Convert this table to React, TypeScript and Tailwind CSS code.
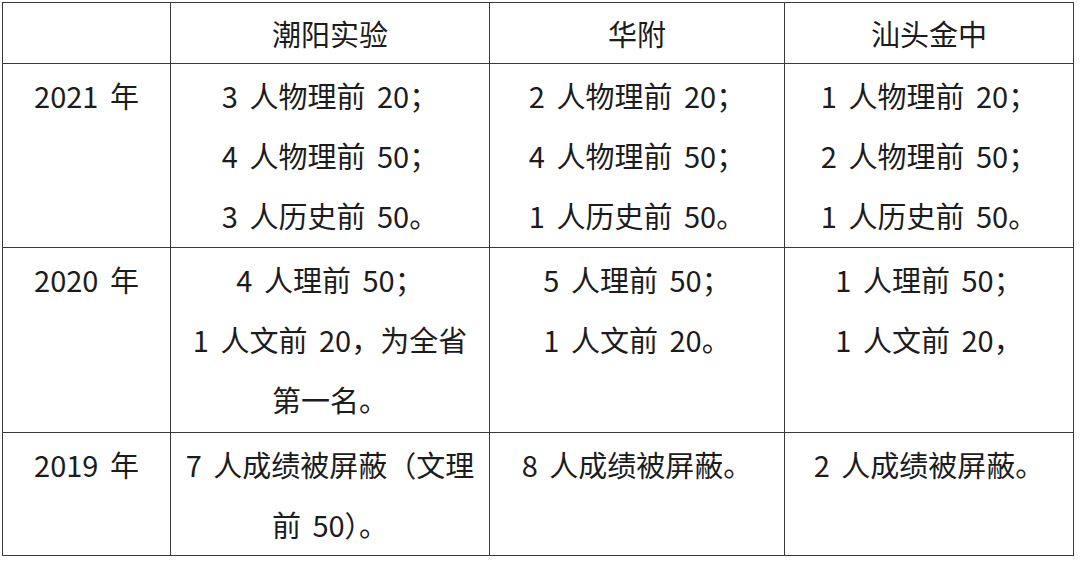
const rows = [
  {
    year: '2021 年',
    cells: [
      ['3 人物理前 20；', '4 人物理前 50；', '3 人历史前 50。'],
      ['2 人物理前 20；', '4 人物理前 50；', '1 人历史前 50。'],
      ['1 人物理前 20；', '2 人物理前 50；', '1 人历史前 50。'],
    ],
    h: 'h-[184px]',
  },
  {
    year: '2020 年',
    cells: [
      ['4 人理前 50；', '1 人文前 20，为全省', '第一名。'],
      ['5 人理前 50；', '1 人文前 20。'],
      ['1 人理前 50；', '1 人文前 20，'],
    ],
    h: 'h-[185px]',
  },
  {
    year: '2019 年',
    cells: [
      ['7 人成绩被屏蔽（文理', '前 50）。'],
      ['8 人成绩被屏蔽。'],
      ['2 人成绩被屏蔽。'],
    ],
    h: 'h-[123px]',
  },
];

export default function App() {
  return (
    <div
      className="w-[1080px] h-[561px] bg-white pt-[2px] pl-[2px] text-[#1c1c1c]"
      style={{ fontFamily: '"Noto Sans CJK SC", "Noto Sans", sans-serif' }}
    >
      <table className="table-fixed border-collapse text-[29px] leading-[60px] [word-spacing:5px]">
        <colgroup>
          <col className="w-[168px]" />
          <col className="w-[319px]" />
          <col className="w-[295px]" />
          <col className="w-[289px]" />
        </colgroup>
        <thead>
          <tr className="h-[61px]">
            <th className="border border-[#3a3a3a] font-normal leading-[56px]" />
            <th className="border border-[#3a3a3a] font-normal text-center align-middle leading-[56px]">潮阳实验</th>
            <th className="border border-[#3a3a3a] font-normal text-center align-middle leading-[56px]">华附</th>
            <th className="border border-[#3a3a3a] font-normal text-center align-middle leading-[56px]">汕头金中</th>
          </tr>
        </thead>
        <tbody>
          {rows.map((r) => (
            <tr key={r.year} className={r.h}>
              <td className="border border-[#3a3a3a] align-top text-center pt-[1px]">{r.year}</td>
              {r.cells.map((lines, i) => (
                <td key={i} className="border border-[#3a3a3a] align-top text-center pt-[1px]">
                  {lines.map((l) => (
                    <div key={l}>{l}</div>
                  ))}
                </td>
              ))}
            </tr>
          ))}
        </tbody>
      </table>
    </div>
  );
}
